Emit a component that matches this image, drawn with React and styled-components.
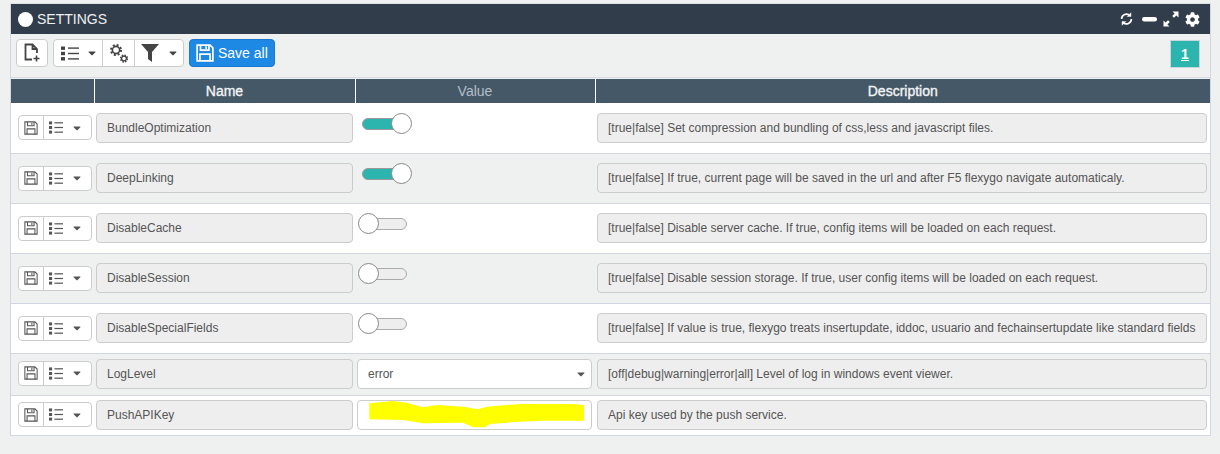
import React from "react";
import styled, { createGlobalStyle } from "styled-components";
import { FaCog, FaCaretDown } from "react-icons/fa";

const Global = createGlobalStyle`
  html, body { margin: 0; padding: 0; background: #eff1f1; }
  body { font-family: "Liberation Sans", Arial, sans-serif; color: #555; width: 1220px; height: 454px; overflow: hidden; }
`;
const Page = styled.div`padding: 3px 9px 0 10px;`;
const Panel = styled.div`border: 1px solid #d0d7e2; border-top-color: #dfe3e8;`;
const TitleBar = styled.div`
  height: 30px; background: #323d4b; color: #eef0f2; display: flex; align-items: center;
  justify-content: space-between; padding: 0 10px 0 7px; box-sizing: border-box;
`;
const Title = styled.div`display: flex; align-items: center; gap: 4px; font-size: 14px;`;
const Dot = styled.span`width: 15px; height: 15px; border-radius: 50%; background: #fff; display: block;`;
const TitleIcons = styled.div`
  display: flex; align-items: center; gap: 6px; color: #fff;
  svg { display: block; }
  svg:first-child { margin-right: 3px; }
`;
const Toolbar = styled.div`
  height: 44px; display: flex; align-items: flex-start; padding: 5px 10px 0 5px; box-sizing: border-box;
  gap: 5px; background: #eff1f1; border-bottom: 1px solid #d6dbe2;
`;
const Group = styled.div`
  display: flex; height: 28px; box-sizing: border-box; background: #fff; border: 1px solid #ccc; border-radius: 4px;
  color: #444;
`;
const GroupBtn = styled.div`
  width: ${p => p.$w}px; display: flex; align-items: center; justify-content: ${p => p.$pl ? "flex-start" : "center"};
  padding-left: ${p => p.$pl || 0}px; gap: ${p => p.$gap || 0}px;
  box-sizing: border-box; & + & { border-left: 1px solid #ccc; }
  svg { display: block; flex: none; }
`;
const SaveAll = styled.div`
  height: 28px; width: 86px; box-sizing: border-box; background: #1e88e5; border: 1px solid #1976d2; border-radius: 4px;
  color: #fff; display: flex; align-items: center; gap: 4px; padding-left: 6px; font-size: 14px;
`;
const Pager = styled.div`
  margin-left: auto; margin-top: 1px; width: 30px; height: 28px; box-sizing: border-box; background: #2cb5ae;
  border: 1px solid #c9d6dc; color: #fff; font-weight: 700; font-size: 14px; text-decoration: underline;
  display: flex; align-items: center; justify-content: center;
`;
const Table = styled.table`
  width: 100%; border-collapse: collapse; table-layout: fixed; background: #fff;
`;
const Th = styled.th`
  height: 24px; padding: 0; background: #455868; color: ${p => p.$dim ? "#b4bec6" : "#f2f4f5"};
  font-size: 14px; font-weight: 400; text-align: center;
  -webkit-text-stroke: ${p => p.$dim ? "0" : "0.35px"};
  border-left: 1px solid #fff; &:first-child { border-left: 0; }
  border-top: 1px solid #eff1f1;
`;
const Tr = styled.tr`
  background: ${p => p.$alt ? "#eff1f1" : "#fff"};
  td { border-top: 1px solid #d0d7e2; }
  &:first-child td { border-top: 0; }
`;
const Td = styled.td`
  height: ${p => p.$h}px; padding: 0 ${p => p.$pr ?? 0}px 0 ${p => p.$pl ?? 0}px; vertical-align: middle; box-sizing: border-box;
`;
const Actions = styled(Group)`
  width: 74px; height: 25px; margin: 0 0 ${p => p.$lift || 0}px 7px; color: #555;
`;
const Readonly = styled.div`
  height: 30px; box-sizing: border-box; background: #eee; border: 1px solid #ccc; border-radius: 4px;
  display: flex; align-items: center; padding-left: 10px; font-size: 12px; color: #555; white-space: nowrap;
`;
const Switch = styled.div`
  position: relative; width: 45px; height: 24px; margin-left: ${p => p.$on ? 7 : 3}px; top: -5px;
`;
const Track = styled.div`
  position: absolute; top: 7px; left: ${p => p.$on ? 0 : 8}px; width: ${p => p.$on ? 38 : 41}px; height: 12px; border-radius: 6px;
  box-sizing: border-box; background: ${p => p.$on ? "#2cb5ae" : "#eee"}; border: 1px solid ${p => p.$on ? "#999" : "#aaa"};
`;
const Knob = styled.div`
  position: absolute; top: 2px; left: ${p => p.$on ? 29 : 0}px; width: 21px; height: 21px; border-radius: 50%;
  box-sizing: border-box; background: #fff; border: 1px solid #888;
`;
const Field = styled.div`
  height: 30px; box-sizing: border-box; background: #fff; border: 1px solid #ccc; border-radius: 4px; margin: 0 3px 0 2px;
  display: flex; align-items: center; justify-content: space-between; padding: 0 4px 0 10px; font-size: 12px; color: #555; position: relative;
`;
const Scribble = styled.svg`position: absolute; left: 0; top: 0; display: block;`;

const FileAdd = () => (
  <svg width="18" height="20" viewBox="0 0 18 20" fill="none" stroke="#444" strokeWidth="1.8">
    <path d="M9 16.5H2.5V1.5H9.5L14 6V10M9.5 1.5V6H14" />
    <path d="M10.5 15.5h6M13.5 12.5v6" strokeWidth="1.6" />
  </svg>
);
const Floppy = ({ size, color, w = 1.2 }) => (
  <svg width={size} height={size} viewBox="0 0 16 16" fill="none" stroke={color} strokeWidth={w}>
    <path d="M1 1h11.5L15 3.5V15H1z" />
    <path d="M4 1v4.5h7.5V1M9 2v2.5M3.5 15V9h9v6" />
  </svg>
);
const ListIcon = ({ w, h, color }) => (
  <svg width={w} height={h} viewBox="0 0 18 15" preserveAspectRatio="none" fill={color}>
    <rect x="0" y="0.5" width="4" height="3.4" /><rect x="0" y="5.8" width="4" height="3.4" /><rect x="0" y="11.1" width="4" height="3.4" />
    <rect x="7" y="1.4" width="11" height="1.4" /><rect x="7" y="6.8" width="11" height="1.4" /><rect x="7" y="12.2" width="11" height="1.4" />
  </svg>
);
const Gears = () => (
  <svg width="18" height="19" viewBox="0 0 18 19" fill="none" stroke="#444">
    <circle cx="6" cy="6" r="3.6" strokeWidth="1.6" />
    <circle cx="6" cy="6" r="5" strokeWidth="2" strokeDasharray="2 1.93" />
    <circle cx="14" cy="14.5" r="2.4" strokeWidth="1.3" />
    <circle cx="14" cy="14.5" r="3.4" strokeWidth="1.5" strokeDasharray="1.5 1.17" />
  </svg>
);
const Funnel = () => (
  <svg width="18" height="18" viewBox="0 0 18 18" fill="#444">
    <path d="M0 0H18L11 8V18L7 15V8Z" />
  </svg>
);
const SyncIcon = () => (
  <svg width="13" height="14" viewBox="0 0 13 14" fill="none" stroke="#fff" strokeWidth="1.7">
    <path d="M1.6 7A4.9 4.9 0 0 1 9.8 3.4" />
    <path d="M11.4 7A4.9 4.9 0 0 1 3.2 10.6" />
    <path d="M11 0.7V4.5H7.2Z" fill="#fff" strokeWidth="0.4" />
    <path d="M2 13.3V9.5H5.8Z" fill="#fff" strokeWidth="0.4" />
  </svg>
);
const MinusBar = () => (
  <svg width="15" height="5" viewBox="0 0 15 5" fill="#fff"><rect width="15" height="4.6" rx="2.3" /></svg>
);
const ExpandIcon = () => (
  <svg width="16" height="16" viewBox="0 0 16 16" fill="#fff">
    <path d="M9.5 0.5H15.5V6.5L13.4 4.4L11 6.8L9.2 5L11.6 2.6Z" />
    <path d="M6.5 15.5H0.5V9.5L2.6 11.6L5 9.2L6.8 11L4.4 13.4Z" />
  </svg>
);

const rows = [
  { n: "BundleOptimization", on: true, d: "[true|false] Set compression and bundling of css,less and javascript files." },
  { n: "DeepLinking", on: true, alt: true, d: "[true|false] If true, current page will be saved in the url and after F5 flexygo navigate automaticaly." },
  { n: "DisableCache", on: false, d: "[true|false] Disable server cache. If true, config items will be loaded on each request." },
  { n: "DisableSession", on: false, alt: true, d: "[true|false] Disable session storage. If true, user config items will be loaded on each request." },
  { n: "DisableSpecialFields", on: false, d: "[true|false] If value is true, flexygo treats insertupdate, iddoc, usuario and fechainsertupdate like standard fields" },
  { n: "LogLevel", select: "error", alt: true, h: 42, lift: 2, d: "[off|debug|warning|error|all] Level of log in windows event viewer." },
  { n: "PushAPIKey", key_: true, h: 40, lift: 1, d: "Api key used by the push service." },
];

export default function App() {
  return (
    <>
      <Global />
      <Page>
        <Panel>
          <TitleBar>
            <Title><Dot />SETTINGS</Title>
            <TitleIcons>
              <SyncIcon />
              <MinusBar />
              <ExpandIcon />
              <FaCog size={15} />
            </TitleIcons>
          </TitleBar>
          <Toolbar>
            <Group><GroupBtn $w={30}><FileAdd /></GroupBtn></Group>
            <Group>
              <GroupBtn $w={48} $pl={7} $gap={7}><ListIcon w={18} h={15} color="#444" /><FaCaretDown size={12} /></GroupBtn>
              <GroupBtn $w={32}><Gears /></GroupBtn>
              <GroupBtn $w={49} $pl={6} $gap={8}><Funnel /><FaCaretDown size={12} /></GroupBtn>
            </Group>
            <SaveAll><Floppy size={18} color="#fff" w={1.5} />Save all</SaveAll>
            <Pager>1</Pager>
          </Toolbar>
          <Table>
            <colgroup>
              <col style={{ width: 83 }} /><col style={{ width: 261 }} /><col style={{ width: 240 }} /><col />
            </colgroup>
            <thead>
              <tr><Th /><Th>Name</Th><Th $dim>Value</Th><Th>Description</Th></tr>
            </thead>
            <tbody>
              {rows.map(r => (
                <Tr key={r.n} $alt={r.alt}>
                  <Td $h={r.h || 50}>
                    <Actions $lift={r.lift}>
                      <GroupBtn $w={24}><Floppy size={14} color="#555" /></GroupBtn>
                      <GroupBtn $w={48} $pl={5} $gap={8}><ListIcon w={14} h={13} color="#555" /><FaCaretDown size={12} /></GroupBtn>
                    </Actions>
                  </Td>
                  <Td $pl={2} $pr={2} $h={r.h || 50}><Readonly>{r.n}</Readonly></Td>
                  <Td $h={r.h || 50}>
                    {r.select ? (
                      <Field>{r.select}<FaCaretDown size={12} /></Field>
                    ) : r.key_ ? (
                      <Field>
                        <Scribble width="236" height="30" viewBox="0 0 236 30">
                          <path fill="#ff0" d="M11.3 2.3L35 0L48.7 1.7L65 6.3L78.7 4L105 5.7L120 8.3L128.7 5.7L162 3L215 3L226 4L226 19.7L185 19.7L162 20.7L132 23L127 26.3L115.3 26.3L105 21.7L65 22.3L45 19L11.3 18.3Z" />
                        </Scribble>
                      </Field>
                    ) : (
                      <Switch $on={r.on}><Track $on={r.on} /><Knob $on={r.on} /></Switch>
                    )}
                  </Td>
                  <Td $pl={2} $pr={3} $h={r.h || 50}><Readonly>{r.d}</Readonly></Td>
                </Tr>
              ))}
            </tbody>
          </Table>
        </Panel>
      </Page>
    </>
  );
}
